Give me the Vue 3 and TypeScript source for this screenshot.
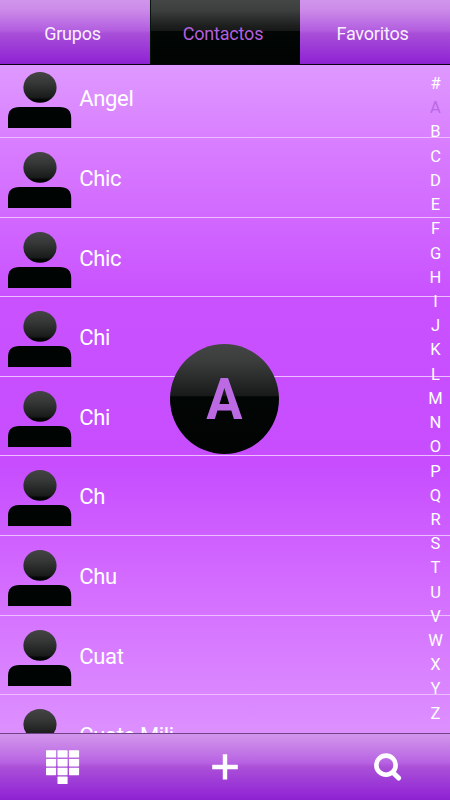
<script setup lang="ts">
interface Tab {
  label: string
  active: boolean
}

const tabs: Tab[] = [
  { label: 'Grupos', active: false },
  { label: 'Contactos', active: true },
  { label: 'Favoritos', active: false },
]

const contacts: string[] = ['Angel', 'Chic', 'Chic', 'Chi', 'Chi', 'Ch', 'Chu', 'Cuat', 'Cuate Mili']
const letters: string[] = '#ABCDEFGHIJKLMNOPQRSTUVWXYZ'.split('')
const current = 'A'
const keys: [number, number][] = [
  [0, 0], [1, 0], [2, 0],
  [0, 1], [1, 1], [2, 1],
  [0, 2], [1, 2], [2, 2],
  [1, 3],
]
</script>

<template>
  <div class="screen">
    <nav class="tabs">
      <button v-for="tab in tabs" :key="tab.label" class="tab" :class="{ active: tab.active }">
        {{ tab.label }}
      </button>
    </nav>

    <main class="content">
      <ul class="contacts">
        <li v-for="(name, i) in contacts" :key="i" class="contact">
          <svg class="avatar" width="64" height="58" viewBox="0 0 64 58">
            <defs>
              <linearGradient :id="'head' + i" x1="0" y1="0" x2="0" y2="1">
                <stop offset="0" stop-color="#434443" />
                <stop offset="0.35" stop-color="#363837" />
                <stop offset="0.82" stop-color="#191c1b" />
                <stop offset="0.9" stop-color="#030604" />
                <stop offset="1" stop-color="#000302" />
              </linearGradient>
            </defs>
            <ellipse cx="32" cy="16.4" rx="16.6" ry="15.4" :fill="`url(#head${i})`" />
            <path d="M0 57.1V47Q0 36.1 11.5 36.1H51.5Q63.2 36.1 63.2 47V57.1Z" fill="#000503" />
          </svg>
          <span class="name">{{ name }}</span>
        </li>
      </ul>

      <ol class="index">
        <li v-for="letter in letters" :key="letter" :class="{ current: letter === current }">{{ letter }}</li>
      </ol>

      <div class="bubble"><span>{{ current }}</span></div>
    </main>

    <footer class="toolbar">
      <button class="action" aria-label="Teclado">
        <svg class="keypad" width="34" height="34" viewBox="0 0 34 34" fill="#fff">
          <rect
            v-for="([col, row], k) in keys"
            :key="k"
            :x="0 + col * 11.5"
            :y="0.2 + row * 8.8"
            width="10.1"
            height="7.4"
            rx="0.6"
          />
        </svg>
      </button>
      <button class="action" aria-label="Agregar">
        <svg width="26" height="26" viewBox="0 0 26 26" fill="#fff">
          <path d="M10.8 0.2H15.2V10.7H25.8V15.2H15.2V25.6H10.8V15.2H0.2V10.7H10.8Z" />
        </svg>
      </button>
      <button class="action" aria-label="Buscar">
        <svg width="28" height="28" viewBox="0 0 28 28" fill="none" stroke="#fff">
          <circle cx="12" cy="12.2" r="9.6" stroke-width="4.6" />
          <path d="M19.2 19.8L24.6 25" stroke-width="5" stroke-linecap="round" />
        </svg>
      </button>
    </footer>
  </div>
</template>

<style>
body {
  margin: 0;
}
</style>

<style scoped>
.screen {
  display: flex;
  flex-direction: column;
  width: 450px;
  height: 800px;
  overflow: hidden;
  font-family: Roboto, "Liberation Sans", sans-serif;
  color: #fff;
}

button {
  border: 0;
  margin: 0;
  padding: 0;
  background: none;
  font: inherit;
  color: inherit;
}

ul,
ol {
  list-style: none;
  margin: 0;
  padding: 0;
}

.tabs {
  display: grid;
  grid-template-columns: repeat(3, 1fr);
  flex: none;
  height: 65px;
  box-sizing: border-box;
  border-bottom: 1px solid #080010;
}

.tab {
  padding-top: 3px;
  padding-right: 5px;
  font-size: 18px;
  letter-spacing: -0.2px;
  color: #faf0ff;
  background: linear-gradient(#d195ec 0%, #cc8be9 15%, #b25ddf 48%, #a84fd8 52%, #9227d5 94%, #8c22cf 100%);
}

.tab.active {
  color: #b55fdf;
  border-left: 1px solid #04170a;
  background: linear-gradient(#444645 0%, #3e403f 15%, #1d201f 40%, #161918 48%, #020604 49%, #000302 100%);
}

.content {
  position: relative;
  display: flex;
  justify-content: space-between;
  flex: none;
  height: 668px;
  overflow: hidden;
  background: linear-gradient(#df99ff 0%, #d97fff 11%, #c951ff 35%, #c74dff 60%, #d36bff 77%, #dd90ff 100%);
}

.contacts {
  flex: 1;
  margin-top: -6.7px;
}

.contact {
  display: flex;
  align-items: flex-start;
  height: 79.62px;
  box-sizing: border-box;
  padding: 13px 0 0 8px;
  border-bottom: 1px solid #efbcff;
}

.avatar {
  flex: none;
}

.name {
  margin: 15px 0 0 7.3px;
  font-size: 22px;
  line-height: 26px;
  letter-spacing: -0.35px;
}

.index {
  position: absolute;
  top: 7px;
  right: 0;
  width: 29px;
}

.index li {
  height: 24.23px;
  line-height: 24.8px;
  font-size: 16.5px;
  text-align: center;
}

.index .current {
  color: #ba68e4;
}

.bubble {
  position: absolute;
  left: 170px;
  top: 279px;
  display: flex;
  align-items: center;
  justify-content: center;
  width: 109px;
  height: 110px;
  border-radius: 50%;
  background: linear-gradient(#444645 0%, #3c3e3d 15%, #1d201f 42%, #171a19 47%, #020604 48%, #000302 100%);
}

.bubble span {
  font-size: 58px;
  font-weight: 700;
  line-height: 68px;
  color: #bc69e4;
  transform: scaleX(0.93);
}

.toolbar {
  display: grid;
  grid-template-columns: 125px 200px 125px;
  flex: none;
  height: 67px;
  box-sizing: border-box;
  border-top: 1px solid #71448a;
  background: linear-gradient(#d195ec 0%, #cc8be9 10%, #b863e3 43%, #aa50d8 50%, #9227d5 94%, #8c22cf 100%);
}

.action {
  display: flex;
  align-items: center;
  justify-content: center;
}
</style>
